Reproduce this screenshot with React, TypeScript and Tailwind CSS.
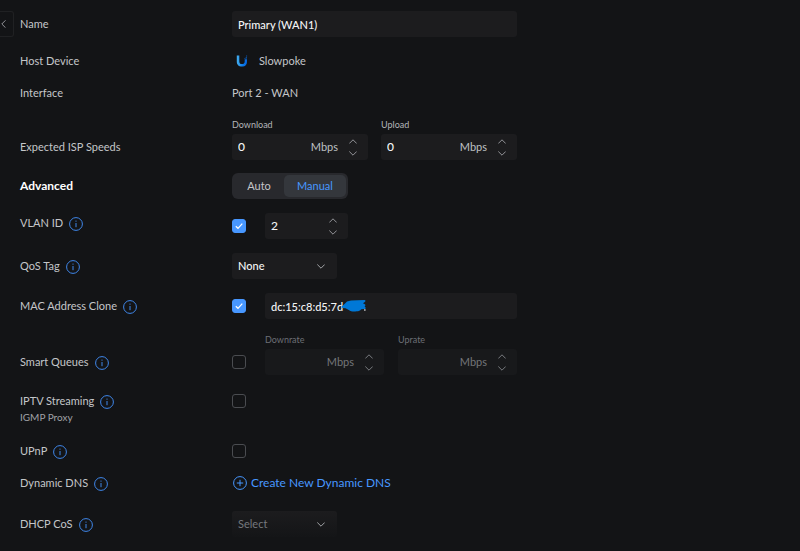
import { useId, useState } from 'react'
import type { ReactNode } from 'react'

function InfoIcon() {
  return (
    <svg viewBox="0 0 14 14" className="mt-0.5 size-3.5 shrink-0 text-[#3f87ea]" fill="none" stroke="currentColor">
      <circle cx="7" cy="7" r="6.400" />
      <path d="M7 6v4.200" />
      <path d="M7 3.600v1.100" />
    </svg>
  )
}

function Chevron({ up = false }: { up?: boolean }) {
  return (
    <svg viewBox="0 0 8 5" className="h-[5px] w-2" fill="none" stroke="currentColor" strokeWidth="0.9">
      <path d={up ? 'M0.3 4.5 4 0.8l3.7 3.7' : 'M0.3 0.5 4 4.2 7.7 0.5'} />
    </svg>
  )
}

function UnifiLogo() {
  return (
    <svg viewBox="0 0 12 12" className="size-3" aria-hidden="true">
      <defs>
        <linearGradient id="unifi" x1="0" y1="0" x2="1" y2="0">
          <stop offset="0" stopColor="#45b0ee" />
          <stop offset="0.6" stopColor="#0a78ea" />
          <stop offset="1" stopColor="#0563d9" />
        </linearGradient>
      </defs>
      <path
        fill="url(#unifi)"
        d="M0.800 0.500h2.500v5.700c0 1.900 1 2.900 2.700 2.900 1.500 0 2.700-.8 2.700-2.700V4.200h2.300v2.200c0 3.200-1.900 5.200-5 5.200-3.200 0-5.200-1.900-5.200-5.200z"
      />
      <path fill="#0a6be0" d="M9.700 2.300h1.100v1.200H9.700zM8.500 3h.8v.8h-.8zM10.300.6h.8v.8h-.8z" />
    </svg>
  )
}

type RowProps = {
  label: string
  htmlFor?: string
  info?: boolean
  note?: string
  strong?: boolean
  className?: string
  children: ReactNode
}

function Row({ label, htmlFor, info, note, strong, className = 'items-center', children }: RowProps) {
  const tone = strong ? 'text-[12px] font-bold text-white' : 'text-[#c4c6c9]'
  return (
    <div className={`flex ${className}`}>
      <div className="w-[212px] shrink-0">
        <div className="flex h-5 items-center gap-1.5">
          {htmlFor ? (
            <label htmlFor={htmlFor} className={tone}>{label}</label>
          ) : (
            <span className={tone}>{label}</span>
          )}
          {info && <InfoIcon />}
        </div>
        {note && <p className="text-[10px] leading-3 text-[#a0a2a6]">{note}</p>}
      </div>
      <div className="flex w-full max-w-[285px] items-center">{children}</div>
    </div>
  )
}

function Checkbox({ id, defaultChecked }: { id: string; defaultChecked?: boolean }) {
  return (
    <span className="grid size-3.5 shrink-0 place-items-center">
      <input
        id={id}
        type="checkbox"
        defaultChecked={defaultChecked}
        className="peer col-start-1 row-start-1 size-3.5 appearance-none rounded-[3px] border border-[#4a4c50] checked:border-[#4797ff] checked:bg-[#4797ff]"
      />
      <svg
        viewBox="0 0 14 14"
        className="pointer-events-none col-start-1 row-start-1 hidden size-3.5 peer-checked:block"
        fill="none"
        stroke="white"
        strokeWidth="1.2"
      >
        <path d="M3.800 7.200 6 9.300l4.300-4.700" />
      </svg>
    </span>
  )
}

type NumberBoxProps = {
  caption?: string
  label?: string
  initial?: string
  unit?: string
  disabled?: boolean
  className?: string
}

function NumberBox({ caption, label, initial = '', unit, disabled, className = 'flex-1' }: NumberBoxProps) {
  const [value, setValue] = useState(initial)
  const inputId = useId()
  const step = (by: number) => setValue(String(Math.max(0, Number(value) + by)))

  return (
    <div className={`min-w-0 ${className}`}>
      {caption && (
        <label
          htmlFor={inputId}
          className={`mb-[3px] block text-[9px] leading-3 ${disabled ? 'text-[#6c6f75]' : 'text-[#b4b6b9]'}`}
        >
          {caption}
        </label>
      )}
      <div className={`flex h-[26px] items-center rounded-[3px] pr-[11px] pl-1.5 ${disabled ? 'bg-[#18191b]' : 'bg-[#1c1c1e]'}`}>
        <input
          id={inputId}
          aria-label={label}
          inputMode="numeric"
          value={value}
          disabled={disabled}
          onChange={(e) => setValue(e.target.value)}
          className="min-w-0 flex-1 bg-transparent text-[12px] font-medium text-[#f4f5f6] outline-none"
        />
        {unit && <span className={disabled ? 'text-[#747679]' : 'text-[#bfc1c4]'}>{unit}</span>}
        <div className={`ml-[11px] flex flex-col gap-[7px] ${disabled ? 'text-[#85878b]' : 'text-[#a0a2a6]'}`}>
          <button type="button" aria-label="Increase" disabled={disabled} onClick={() => step(1)}>
            <Chevron up />
          </button>
          <button type="button" aria-label="Decrease" disabled={disabled} onClick={() => step(-1)}>
            <Chevron />
          </button>
        </div>
      </div>
    </div>
  )
}

function SelectBox({ id, options, className }: { id: string; options: string[]; className: string }) {
  return (
    <div className={`grid h-[26px] w-[105px] items-center rounded-[3px] ${className}`}>
      <select id={id} className="col-start-1 row-start-1 h-full w-full appearance-none bg-transparent pl-1.5 outline-none">
        {options.map((option) => (
          <option key={option}>{option}</option>
        ))}
      </select>
      <span className="pointer-events-none col-start-1 row-start-1 mr-3 justify-self-end text-[#b0b2b5]">
        <Chevron />
      </span>
    </div>
  )
}

export default function App() {
  const [mode, setMode] = useState('Manual')

  return (
    <main className="flex min-h-screen bg-[#131416] pt-[11px] font-['Lato','Liberation_Sans',sans-serif] text-[11px] leading-4">
      <button
        type="button"
        aria-label="Back"
        className="flex h-[26px] w-3.5 shrink-0 items-center rounded-r-[3px] border border-l-0 border-[#202123] pl-px text-[#a0a2a6]"
      >
        <svg viewBox="0 0 5 8" className="h-2 w-[5px]" fill="none" stroke="currentColor" strokeWidth="0.9">
          <path d="M4.500.3.800 4l3.700 3.700" />
        </svg>
      </button>

      <form className="min-w-0 flex-1 pl-1.5" onSubmit={(e) => e.preventDefault()}>
        <Row label="Name" htmlFor="name">
          <input
            id="name"
            defaultValue="Primary (WAN1)"
            className="h-[26px] w-full rounded-[3px] bg-[#1c1c1e] px-1.5 font-medium text-[#f4f5f6] outline-none"
          />
        </Row>
        <Row label="Host Device" className="mt-3.5 items-center">
          <span className="ml-1 flex items-center gap-[11px] text-[#c4c6c9]">
            <UnifiLogo />
            Slowpoke
          </span>
        </Row>
        <Row label="Interface" className="mt-3 items-center">
          <span className="text-[#c4c6c9]">Port 2 - WAN</span>
        </Row>
        <Row label="Expected ISP Speeds" className="mt-4 items-end [&>div:first-child]:pb-[3px]">
          <div className="flex w-full gap-[13px]">
            <NumberBox caption="Download" initial="0" unit="Mbps" />
            <NumberBox caption="Upload" initial="0" unit="Mbps" />
          </div>
        </Row>

        <Row label="Advanced" strong className="mt-[13px] items-center">
          <div className="flex h-[26px] w-[116px] rounded-[6px] bg-[#28292d] p-0.5">
            {['Auto', 'Manual'].map((name) => (
              <button
                key={name}
                type="button"
                aria-pressed={mode === name}
                onClick={() => setMode(name)}
                className={`rounded-[5px] ${name === 'Auto' ? 'w-[50px]' : 'flex-1'} ${
                  mode === name ? 'bg-[#34373c] text-[#4797ff]' : 'text-[#c4c6c9]'
                }`}
              >
                {name}
              </button>
            ))}
          </div>
        </Row>
        <Row label="VLAN ID" htmlFor="vlan" info className="mt-3.5 items-start">
          <Checkbox id="vlan" defaultChecked />
          <NumberBox label="VLAN ID value" initial="2" className="ml-[19px] w-[83px]" />
        </Row>
        <Row label="QoS Tag" htmlFor="qos" info className="mt-3.5 items-center">
          <SelectBox id="qos" options={['None', '1', '2', '3']} className="bg-[#1c1c1e] font-medium text-[#f4f5f6]" />
        </Row>
        <Row label="MAC Address Clone" htmlFor="mac" info className="mt-3.5 items-center">
          <Checkbox id="mac" defaultChecked />
          <div className="relative ml-[19px] flex-1">
            <input
              aria-label="MAC address"
              defaultValue="dc:15:c8:d5:7d"
              className="h-[26px] w-full rounded-[3px] bg-[#1c1c1e] px-1.5 font-medium text-[#f4f5f6] outline-none"
            />
            {/* marker scribble hiding the tail of the address */}
            <svg viewBox="0 0 26 14" className="absolute top-1.5 left-[76px] h-3.5 w-[26px]" aria-hidden="true">
              <path
                fill="#0078d7"
                d="M0.500 7.500 3 5.500 6 2.500 10 1.500 23.500 1c1.200.2 1.200 1.300.3 2L22 4.200l1.800 1c1 .8.800 1.500-.2 2l1 1.300c.3 1.200-.6 1.800-1.800 1.500l-2.600.3c-1 1.500-2.600 2-4.400 2-3 .4-5.800.4-8-1.300L4.500 9.300 1.500 9z"
              />
              <path fill="#e4e5e6" d="M23.200 10.200h1.300v1.500h-1.300z" />
            </svg>
          </div>
        </Row>
        <Row label="Smart Queues" htmlFor="queues" info className="mt-[15px] items-end [&>div:first-child]:pb-[3px]">
          <div className="mb-1.5 self-end">
            <Checkbox id="queues" />
          </div>
          <div className="ml-[19px] flex min-w-0 flex-1 gap-3.5">
            <NumberBox caption="Downrate" unit="Mbps" disabled />
            <NumberBox caption="Uprate" unit="Mbps" disabled />
          </div>
        </Row>
        <Row label="IPTV Streaming" htmlFor="iptv" note="IGMP Proxy" info className="mt-4 items-start">
          <div className="flex h-5 items-center">
            <Checkbox id="iptv" />
          </div>
        </Row>
        <Row label="UPnP" htmlFor="upnp" info className="mt-[18px] items-center">
          <Checkbox id="upnp" />
        </Row>
        <Row label="Dynamic DNS" info className="mt-3 items-center">
          <button type="button" className="flex items-center gap-1 pl-px text-[12px] text-[#4797ff]">
            <svg viewBox="0 0 14 14" className="size-3.5" fill="none" stroke="currentColor">
              <circle cx="7" cy="7" r="6.400" />
              <path d="M7 3.800v6.400M3.800 7h6.400" />
            </svg>
            Create New Dynamic DNS
          </button>
        </Row>
        <Row label="DHCP CoS" htmlFor="cos" info className="mt-[18px] items-center">
          <SelectBox id="cos" options={['Select', '0', '1', '2']} className="bg-linear-to-b from-[#1c1c1e] to-[#141517] text-[#75787e]" />
        </Row>
      </form>
    </main>
  )
}
